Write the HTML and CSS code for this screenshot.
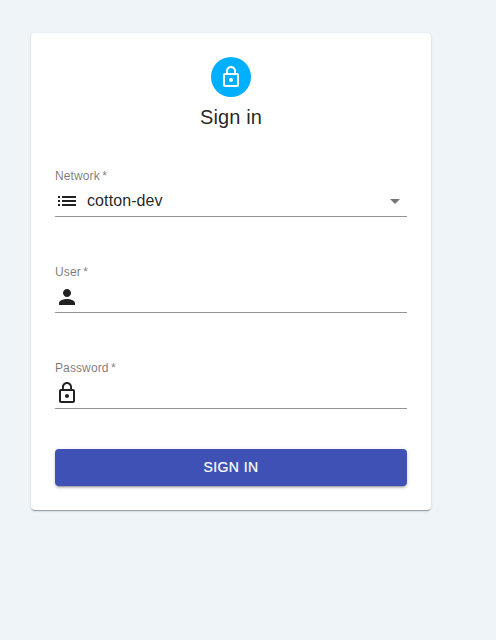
FILE: index.html
```html
<!DOCTYPE html>
<html lang="en">
<head>
<meta charset="utf-8">
<title>Sign in</title>
<link rel="stylesheet" href="styles.css">
</head>
<body>
<main class="card">
  <div class="avatar">
    <svg class="icon" viewBox="0 0 24 24"><path d="M12 17c1.1 0 2-.9 2-2s-.9-2-2-2-2 .9-2 2 .9 2 2 2zm6-9h-1V6c0-2.76-2.24-5-5-5S7 3.240 7 6v2H6c-1.1 0-2 .9-2 2v10c0 1.1.9 2 2 2h12c1.1 0 2-.9 2-2V10c0-1.1-.9-2-2-2zM8.900 6c0-1.710 1.390-3.100 3.100-3.100s3.100 1.390 3.100 3.100v2H8.900V6zM18 20H6V10h12v10z"/></svg>
  </div>
  <h1 class="title">Sign in</h1>
  <form class="form">
    <div class="field">
      <span class="label">Network<span class="star">*</span></span>
      <div class="control">
        <svg class="icon" viewBox="0 0 24 24"><path d="M3 13h2v-2H3v2zm0 4h2v-2H3v2zm0-8h2V7H3v2zm4 4h14v-2H7v2zm0 4h14v-2H7v2zM7 7v2h14V7H7z"/></svg>
        <span class="value">cotton-dev</span>
        <svg class="icon arrow" viewBox="0 0 24 24"><path d="M7 10l5 5 5-5z"/></svg>
      </div>
    </div>
    <div class="field">
      <span class="label">User<span class="star">*</span></span>
      <div class="control">
        <svg class="icon" viewBox="0 0 24 24"><path d="M12 12c2.210 0 4-1.790 4-4s-1.790-4-4-4-4 1.790-4 4 1.790 4 4 4zm0 2c-2.670 0-8 1.340-8 4v2h16v-2c0-2.660-5.330-4-8-4z"/></svg>
      </div>
    </div>
    <div class="field">
      <span class="label">Password<span class="star">*</span></span>
      <div class="control">
        <svg class="icon" viewBox="0 0 24 24"><path d="M12 17c1.1 0 2-.9 2-2s-.9-2-2-2-2 .9-2 2 .9 2 2 2zm6-9h-1V6c0-2.760-2.240-5-5-5S7 3.240 7 6v2H6c-1.1 0-2 .9-2 2v10c0 1.1.9 2 2 2h12c1.1 0 2-.9 2-2V10c0-1.1-.9-2-2-2zM8.900 6c0-1.710 1.390-3.100 3.100-3.100s3.100 1.390 3.100 3.100v2H8.900V6zM18 20H6V10h12v10z"/></svg>
      </div>
    </div>
    <button class="submit" type="button">SIGN IN</button>
  </form>
</main>
</body>
</html>
```
FILE: styles.css
```css
* { box-sizing: border-box; }
body {
  margin: 0;
  min-height: 640px;
  padding: 33px 0 0 31px;
  background: #eef4f8;
  color: rgba(0, 0, 0, .87);
  font-family: "Liberation Sans", Arial, sans-serif;
}
.card {
  display: flex;
  flex-direction: column;
  align-items: center;
  width: 400px;
  height: 477px;
  padding: 24px;
  background: #fff;
  border-radius: 4px;
  box-shadow: 0 2px 1px -1px rgba(0,0,0,.2), 0 1px 1px rgba(0,0,0,.14), 0 1px 3px rgba(0,0,0,.12);
}
.avatar {
  display: flex;
  align-items: center;
  justify-content: center;
  width: 40px;
  height: 40px;
  border-radius: 50%;
  background: #00b0ff;
  color: #fff;
}
.icon { display: block; width: 24px; height: 24px; flex: none; fill: currentColor; }
.title { margin: 4px 0 0; font-size: 20px; font-weight: 400; line-height: 32px; letter-spacing: .15px; }
.form { width: 100%; margin-top: 36px; }
.field { height: 48px; padding-top: 1px; margin-bottom: 48px; border-bottom: 1px solid #949494; }
.label { display: block; height: 13px; font-size: 12px; line-height: 13px; letter-spacing: .11px; color: rgba(0,0,0,.54); }
.star { margin-left: 2.5px; }
.control { display: flex; align-items: center; height: 36px; }
.value { flex: 1; margin-left: 8px; font-size: 16px; line-height: 24px; letter-spacing: .1px; }
.arrow { color: rgba(0,0,0,.54); }
.submit {
  display: block;
  width: 100%;
  height: 37px;
  margin-top: -8px;
  padding: 0 0 2px;
  border: 0;
  border-radius: 4px;
  background: #3f51b5;
  color: #fff;
  font: 500 14px/24px "Liberation Sans", Arial, sans-serif;
  letter-spacing: .4px;
  -webkit-text-stroke: .2px #fff;
  box-shadow: 0 3px 1px -2px rgba(0,0,0,.2), 0 2px 2px rgba(0,0,0,.14), 0 1px 5px rgba(0,0,0,.12);
}
```
